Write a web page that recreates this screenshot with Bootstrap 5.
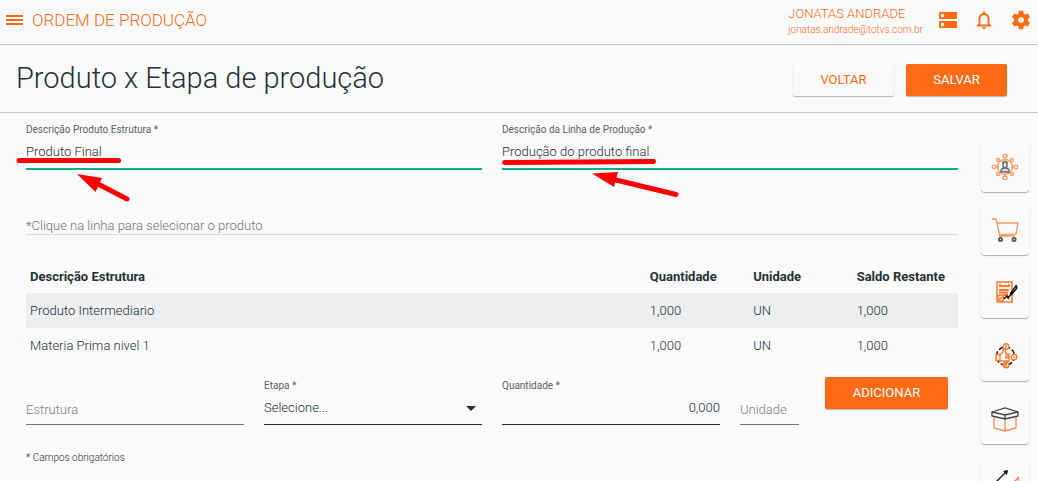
<!DOCTYPE html>
<html lang="pt-BR">
<head>
<meta charset="utf-8">
<meta name="viewport" content="width=device-width, initial-scale=1">
<title>Ordem de Produção</title>
<link href="https://cdn.jsdelivr.net/npm/bootstrap@5.3.0/dist/css/bootstrap.min.css" rel="stylesheet">
<style>
  :root { --brand: #ff6b14; --ink: #263238; --line: #c4c7c8; }
  body { font: 300 13px/20px Roboto, "Open Sans", sans-serif; color: var(--ink); background: #fafafa; }
  .topbar { height: 45px; border-bottom: 1px solid var(--line); color: var(--brand); padding: 0 7px 5px 6px; }
  .topbar a, .topbar button { color: var(--brand); }
  .app-name { font-size: 17px; }
  .topbar .user-mail { font-size: 10px; line-height: 14px; }
  .user-name { line-height: 18px; padding-top: 2px; }
  .pagebar { height: 68px; border-bottom: 1px solid var(--line); padding: 2px 31px 0 16px; }
  .page-title { font-size: 29px; font-weight: 300; line-height: 36px; padding-bottom: 4px; }
  .act { height: 32px; min-width: 101px; padding: 0 26px; border: 0; border-radius: 2px; font-size: 13px; line-height: 32px; color: var(--brand); background: #fafafa; box-shadow: 0 1px 1px rgba(0,0,0,.28); }
  .act-fill { background: var(--brand); color: #fff; font-weight: 400; }
  .act:hover { color: var(--brand); } .act-fill:hover { background: #f06010; color: #fff; }
  .add { width: 123px; margin-right: 10px; }
  .work { padding: 8px 0 0 16px; }
  .work .row { --bs-gutter-x: 20px; margin: 0; }
  .cap { display: block; height: 16px; font-size: 10px; line-height: 18px; font-weight: 400; color: #5a6266; }
  .line-input { display: block; width: 100%; height: 32px; padding: 1px 0 3px; border: 0; border-bottom: 1px solid var(--ink); border-radius: 0; outline: 0; background-color: transparent; color: var(--ink); font-weight: 300; }
  .line-input.valid { height: 33px; border-bottom: 2px solid #0cb287; }
  .line-input.idle { border-color: #70777b; padding-top: 5px; padding-bottom: 3px; }
  .line-input::placeholder { color: #7b8184; opacity: 1; }
  select.line-input { appearance: none; background: no-repeat right 6px center / 10px 5px url("data:image/svg+xml,%3Csvg xmlns='http://www.w3.org/2000/svg' viewBox='0 0 10 5'%3E%3Cpath fill='%23263238' d='M0 0h10L5 5z'/%3E%3C/svg%3E"); }
  .hint { margin: 46px 10px 24px; padding-top: 2px; line-height: 16px; border-bottom: 1px solid #dcdddd; color: #70777a; }
  .grid-wrap { margin: 0 10px 15px; }
  .items { table-layout: fixed; width: 100%; line-height: 20px; }
  .items th, .items td { padding: 8px 4px 6px; }
  .items th { font-weight: 700; }
  .items .picked { background: #eceef0; }
  .items .picked td { padding-bottom: 7px; }
  .wide { width: 66.5%; }
  .slim { width: 11.1%; }
  .foot { margin: 24px 10px 0; font-size: 10px; line-height: 18px; color: #263238; }
  .side { width: 70px; padding: 31px 9px 0 13px; gap: 15px; }
  .tile { width: 48px; height: 48px; padding: 0 0 2px; border: 0; border-radius: 4px; background: #fbfbfb; box-shadow: 0 1px 1px rgba(0,0,0,.3); }
  .marks { left: -10px; top: 20px; pointer-events: none; overflow: visible; }
  svg { display: block; }
</style>
</head>
<body class="vh-100 overflow-hidden d-flex flex-column">
<header class="topbar d-flex align-items-center flex-shrink-0">
  <button class="btn p-0 border-0" aria-label="Menu"><svg width="18" height="14" viewBox="0 0 18 14"><path fill="currentColor" d="M0 2h17v2H0zm0 4h17v2H0zm0 4h17v2H0z"/></svg></button>
  <span class="app-name ms-2">ORDEM DE PRODUÇÃO</span>
  <div class="ms-auto me-3">
    <div class="user-name">JONATAS ANDRADE</div>
    <a class="user-mail d-block text-decoration-none" href="#">jonatas.andrade@totvs.com.br</a>
  </div>
  <nav class="d-flex align-items-center gap-3" aria-label="Atalhos">
    <a href="#" aria-label="Servidores"><svg width="18" height="18" viewBox="0 0 18 18"><path fill="currentColor" fill-rule="evenodd" d="M1 1h16q1 0 1 1v5q0 1-1 1H1Q0 8 0 7V2Q0 1 1 1m2.500 1.700a1.800 1.800 0 1 0 .01 0M1 10h16q1 0 1 1v5q0 1-1 1H1q-1 0-1-1v-5q0-1 1-1m2.500 1.700a1.800 1.800 0 1 0 .01 0"/></svg></a>
    <a href="#" aria-label="Notificações"><svg width="22" height="22" viewBox="0 0 24 24"><path fill="currentColor" d="M12 22c1.100 0 2-.9 2-2h-4c0 1.100.9 2 2 2zm6-6v-5c0-3.070-1.630-5.640-4.500-6.320V4c0-.83-.67-1.500-1.500-1.500s-1.500.67-1.500 1.500v.68C7.640 5.360 6 7.920 6 11v5l-2 2v1h16v-1l-2-2zm-2 1H8v-6c0-2.480 1.510-4.500 4-4.500s4 2.020 4 4.500v6z"/></svg></a>
    <a href="#" aria-label="Configurações"><svg width="20" height="20" viewBox="1.500 1.500 21 21"><path fill="currentColor" d="M19.140 12.940c.04-.3.060-.61.060-.94 0-.32-.02-.64-.07-.94l2.030-1.580c.18-.14.23-.41.12-.61l-1.920-3.320c-.12-.22-.37-.29-.59-.22l-2.390.96c-.5-.38-1.030-.7-1.620-.94l-.36-2.540c-.04-.24-.24-.41-.48-.41h-3.840c-.24 0-.43.17-.47.41l-.36 2.540c-.59.24-1.130.57-1.620.94l-2.390-.96c-.22-.08-.47 0-.59.22L2.740 8.870c-.12.21-.08.47.12.61l2.030 1.580c-.05.3-.09.63-.09.94s.02.64.07.94l-2.030 1.580c-.18.14-.23.41-.12.61l1.920 3.320c.12.22.37.29.59.22l2.390-.96c.5.38 1.030.7 1.620.94l.36 2.540c.05.24.24.41.48.41h3.840c.24 0 .44-.17.47-.41l.36-2.540c.59-.24 1.130-.56 1.620-.94l2.390.96c.22.08.47 0 .59-.22l1.920-3.320c.12-.22.070-.47-.12-.61l-2.010-1.580zM12 15a3 3 0 1 1 0-6 3 3 0 0 1 0 6z"/></svg></a>
  </nav>
</header>
<div class="pagebar d-flex align-items-center flex-shrink-0">
  <h1 class="page-title mb-0 me-auto">Produto x Etapa de produção</h1>
  <button class="btn act me-2">VOLTAR</button>
  <button class="btn act act-fill ms-1">SALVAR</button>
</div>
<div class="d-flex flex-fill overflow-hidden">
  <main class="work flex-fill">
    <form>
      <div class="row">
        <div class="col-6"><div class="position-relative">
          <label class="cap" for="produto">Descrição Produto Estrutura *</label>
          <input class="line-input valid" id="produto" value="Produto Final">
          <svg class="marks position-absolute" width="116" height="62" viewBox="16 141 116 62" aria-hidden="true"><path d="M19 160.500H118.500" stroke="red" stroke-width="5" stroke-linecap="round"/><path d="M98 184l29 15" stroke="red" stroke-width="5" stroke-linecap="round"/><path d="M77 174l25 4-6.500 14z" fill="red"/></svg>
        </div></div>
        <div class="col-6"><div class="position-relative">
          <label class="cap" for="linha">Descrição da Linha de Produção *</label>
          <input class="line-input valid" id="linha" value="Produção do produto final">
          <svg class="marks position-absolute" width="190" height="62" viewBox="492 141 190 62" aria-hidden="true"><path d="M504.500 162.500L653.500 161.500" stroke="red" stroke-width="5" stroke-linecap="round"/><path d="M616 180l60 14.500" stroke="red" stroke-width="5" stroke-linecap="round"/><path d="M592 173.500l26-1.500-4 15z" fill="red"/></svg>
        </div></div>
      </div>
      <p class="hint">*Clique na linha para selecionar o produto</p>
      <div class="grid-wrap">
        <table class="items">
          <thead><tr><th class="wide">Descrição Estrutura</th><th class="slim">Quantidade</th><th class="slim">Unidade</th><th>Saldo Restante</th></tr></thead>
          <tbody>
            <tr class="picked"><td>Produto Intermediario</td><td>1,000</td><td>UN</td><td>1,000</td></tr>
            <tr><td>Materia Prima nivel 1</td><td>1,000</td><td>UN</td><td>1,000</td></tr>
          </tbody>
        </table>
      </div>
      <div class="row">
        <div class="col-3"><span class="cap"></span><input class="line-input idle" aria-label="Estrutura" placeholder="Estrutura"></div>
        <div class="col-3"><label class="cap" for="etapa">Etapa *</label><select class="line-input" id="etapa"><option>Selecione...</option></select></div>
        <div class="col-3"><label class="cap" for="qtd">Quantidade *</label><input class="line-input text-end" id="qtd" value="0,000"></div>
        <div class="col-1"><span class="cap"></span><input class="line-input idle" aria-label="Unidade" placeholder="Unidade"></div>
        <div class="col-2 ps-0 text-end"><button type="button" class="btn act act-fill add">ADICIONAR</button></div>
      </div>
      <p class="foot">* Campos obrigatórios</p>
    </form>
  </main>
  <aside class="side d-flex flex-column flex-shrink-0">
    <button class="btn tile flex-shrink-0" aria-label="Equipe"><svg class="m-auto" width="28" height="28" viewBox="0 0 28 28" fill="none" stroke="#f99a62" stroke-width="1.300"><circle cx="14" cy="14" r="7.500"/><g fill="#fbfbfb"><ellipse cx="14" cy="3" rx="2.200" ry="1.600"/><ellipse cx="14" cy="25" rx="2.200" ry="1.600"/><circle cx="3" cy="14" r="1.800"/><circle cx="25" cy="14" r="1.800"/><circle cx="7" cy="7" r="1.500"/><circle cx="21" cy="7" r="1.500"/><circle cx="7" cy="21" r="1.500"/><circle cx="21" cy="21" r="1.500"/></g><path d="M14 5v3M5 14h3m12 0h3M14 21v2"/><g stroke="#666" stroke-width="1.500"><path d="M12 9h4v4l-1 2h-2l-1-2zM10 19v-2q1-2 3-2h2q2 0 3 2v2z" fill="#ddd"/></g></svg></button>
    <button class="btn tile flex-shrink-0" aria-label="Compras"><svg class="m-auto" width="28" height="28" viewBox="0 0 28 28" fill="none" stroke="#f99a62" stroke-width="1.400"><path d="M1 3h4l4 17h15M6 7h21l-2 11-17 1"/><g stroke="#555" stroke-width="1.800"><circle cx="9.500" cy="23.500" r="1.600"/><circle cx="23" cy="23.500" r="1.600"/></g></svg></button>
    <button class="btn tile flex-shrink-0" aria-label="Contratos"><svg class="m-auto" width="28" height="28" viewBox="0 0 28 28" fill="none" stroke="#ff7a30" stroke-width="1.500"><path d="M6 3h15v20H6z" fill="#fff3ec"/><path d="M9 5v2h9V5M8 11h10M8 13.500h9M12 16h5" stroke-width="1.800"/><circle cx="9.500" cy="19" r="3"/><path d="M8 19l1 1 2-2"/><path stroke="#111" stroke-width="1.400" d="M13 20l3-3 1 2 4-5M19 15l6-8M20 16l6-7M18 17l-1 3M25 6l1 3"/></svg></button>
    <button class="btn tile flex-shrink-0" aria-label="Qualidade"><svg class="m-auto" width="28" height="28" viewBox="0 0 28 28" fill="none"><circle cx="14.500" cy="14" r="9" stroke="#111" stroke-width="1.500" stroke-dasharray="5 2"/><g stroke="#ff7a30" stroke-width="1.400" fill="#fbfbfb"><circle cx="15" cy="4.500" r="2.800"/><circle cx="23" cy="15" r="2.800"/><circle cx="15" cy="23" r="2.800"/><path d="M5 12.500h4v6H5zM9 13l3-3 0-3h2l1 5h3v7H9"/><path d="M15 3.500v2m-1-1h2m6 10.500h2m-8 7h-2v2h2M14 14h4m-4 2h4"/></g></svg></button>
    <button class="btn tile flex-shrink-0" aria-label="Produtos"><svg class="m-auto" width="28" height="28" viewBox="0 0 28 28" fill="none" stroke-width="1.300"><path stroke="#ff8a48" d="M3 11v12l11 3 11-3V11M14 14v12"/><path stroke="#444" stroke-width="1.300" d="M1 7l13-4 13 4-13 3zM1 7v4l13 3 13-3V7M14 10v4"/></svg></button>
    <button class="btn tile flex-shrink-0" aria-label="Indicadores"><svg class="m-auto" width="28" height="28" viewBox="0 0 28 28" fill="none" stroke-width="1.400"><path stroke="#222" d="M2 17L15 4"/><path fill="#111" d="M12 3l5-1-1 5z"/><path stroke="#ff7a30" d="M4 26l9-8 6 0 9-9v16z"/></svg></button>
  </aside>
</div>
<script src="https://cdn.jsdelivr.net/npm/bootstrap@5.3.0/dist/js/bootstrap.bundle.min.js"></script>
</body>
</html>
